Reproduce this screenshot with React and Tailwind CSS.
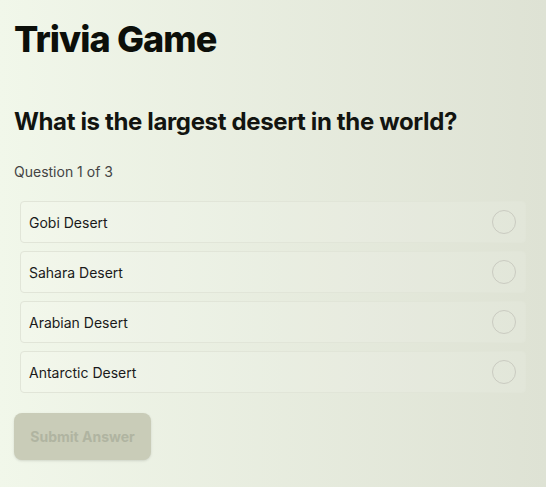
import React from "react";

const options = ["Gobi Desert", "Sahara Desert", "Arabian Desert", "Antarctic Desert"];

export default function App() {
  return (
    <div
      className="min-h-[487px] w-full bg-gradient-to-r from-[#f1f7ea] to-[#dee2d4] px-[14px] pt-[17px] pb-6 text-[#111]"
      style={{ fontFamily: "Inter, 'Noto Sans', sans-serif" }}
    >
      <h1 className="text-[36px] leading-[44px] font-extrabold tracking-[-0.025em] text-[#0c0f0a]">Trivia Game</h1>
      <h2 className="mt-[45px] text-[24px] leading-[32px] font-bold tracking-[-0.015em] text-[#121410]">
        What is the largest desert in the world?
      </h2>
      <p className="mt-[24px] text-[14px] leading-[20px] text-[#444]">Question 1 of 3</p>
      <div className="mt-[19px] ml-[6px] mr-[6px] flex flex-col gap-[8px]">
        {options.map((o) => (
          <div
            key={o}
            className="flex h-[42px] items-center justify-between rounded-[4px] border border-[#e1e5d8] bg-white/10 pl-[8px] pr-[9px]"
          >
            <span className="text-[14px] text-[#1a1a1a]">{o}</span>
            <span className="h-[24px] w-[24px] rounded-full border-[1.5px] border-[#cacbc1]" />
          </div>
        ))}
      </div>
      <button
        disabled
        className="mt-[20px] h-[47px] w-[137px] rounded-[8px] bg-[#c9ccb8] text-[14px] font-bold text-[#b0b4a1] shadow-sm"
      >
        Submit Answer
      </button>
    </div>
  );
}
